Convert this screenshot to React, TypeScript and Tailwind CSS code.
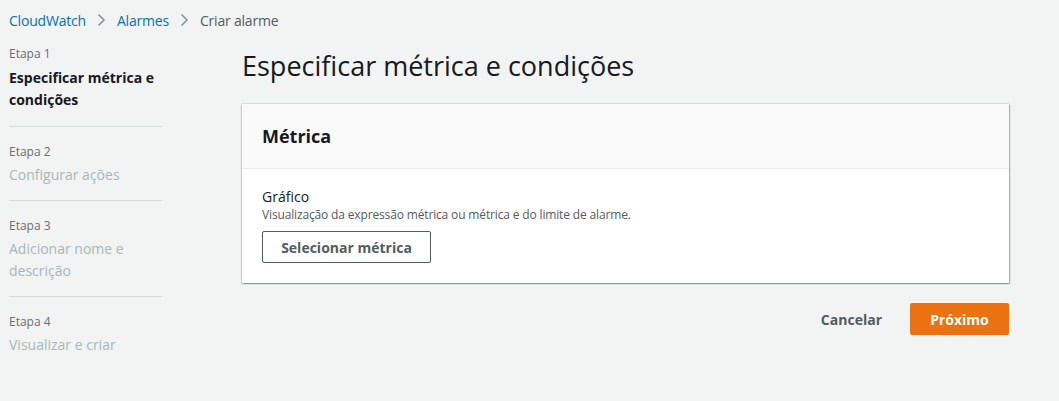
const font = { fontFamily: '"Open Sans", "Noto Sans", Arial, sans-serif' };

function Chevron() {
  return (
    <svg className="mx-[11px] h-[14px] w-[9px] text-[#879596]" viewBox="0 0 9 14" fill="none">
      <path d="M1.5 1.5l5.5 5.5L1.5 12.5" stroke="currentColor" strokeWidth="1.6" />
    </svg>
  );
}

const steps = [
  { n: "Etapa 1", label: "Especificar métrica e condições", active: true },
  { n: "Etapa 2", label: "Configurar ações" },
  { n: "Etapa 3", label: "Adicionar nome e descrição" },
  { n: "Etapa 4", label: "Visualizar e criar" },
];

export default function App() {
  return (
    <div className="min-h-[401px] bg-[#f2f3f3] pl-[9px] text-[#16191f]" style={font}>
      <nav className="flex h-[40px] items-center text-[14px] tracking-[-0.2px]">
        <a className="text-[#0073bb]">CloudWatch</a>
        <Chevron />
        <a className="text-[#0073bb]">Alarmes</a>
        <Chevron />
        <span className="text-[#545b64]">Criar alarme</span>
      </nav>

      <div className="flex gap-[80px]">
        <ol className="w-[153px] pt-[5px]">
          {steps.map((s, i) => (
            <li
              key={s.n}
              className={i > 0 ? "border-t border-[#d5dbdb] pt-[16px] pb-[14px]" : "pb-[15px]"}
            >
              <div className="text-[12px] leading-[18px] text-[#687078]">{s.n}</div>
              <div
                className={
                  s.active
                    ? "mt-[4px] text-[14px] font-bold leading-[22px] text-[#16191f]"
                    : "mt-[3px] text-[14px] leading-[22px] text-[#aab7b8]"
                }
              >
                {s.label}
              </div>
            </li>
          ))}
        </ol>

        <main className="w-[767px]">
          <h1 className="mt-[6px] text-[27px] leading-[40px] font-normal">Especificar métrica e condições</h1>

          <section className="mt-[18px] bg-white shadow-[1px_1px_1px_0_rgba(0,28,36,0.3),-1px_1px_1px_0_rgba(0,28,36,0.15),0_-1px_1px_0_rgba(0,28,36,0.1)]">
            <div className="flex h-[65px] items-center border-b border-[#eaeded] bg-[#fafafa] px-[20px]">
              <h2 className="text-[18px] font-bold">Métrica</h2>
            </div>
            <div className="px-[20px] pt-[18px] pb-[20px]">
              <div className="text-[14px] leading-[20px]">Gráfico</div>
              <div className="text-[12px] leading-[16px] tracking-[-0.15px] text-[#545b64]">
                Visualização da expressão métrica ou métrica e do limite de alarme.
              </div>
              <button className="mt-[8px] h-[32px] w-[169px] rounded-[2px] border border-[#545b64] bg-white text-[14px] font-bold text-[#545b64]">
                Selecionar métrica
              </button>
            </div>
          </section>

          <div className="mt-[20px] flex items-center justify-end gap-[8px]">
            <button className="h-[32px] px-[20px] text-[14px] font-bold text-[#545b64]">Cancelar</button>
            <button className="h-[32px] w-[99px] rounded-[2px] bg-[#ec7211] text-[14px] font-bold text-white">
              Próximo
            </button>
          </div>
        </main>
      </div>
    </div>
  );
}
